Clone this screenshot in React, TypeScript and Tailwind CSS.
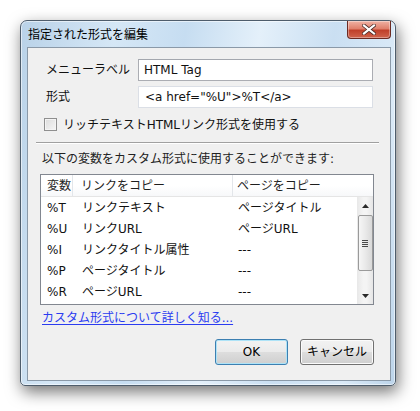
import React from "react";

const FONT = "font-['DejaVu_Sans','Noto_Sans_CJK_JP',sans-serif]";

type Row = { v: string; link: string; page: string };

const ROWS: Row[] = [
  { v: "%T", link: "リンクテキスト", page: "ページタイトル" },
  { v: "%U", link: "リンクURL", page: "ページURL" },
  { v: "%I", link: "リンクタイトル属性", page: "---" },
  { v: "%P", link: "ページタイトル", page: "---" },
  { v: "%R", link: "ページURL", page: "---" },
];

function CloseButton() {
  return (
    <div className="mt-0 flex h-[18px] w-[44px] items-center justify-center rounded-b-[4px] border border-t-0 border-[#6b2a22] bg-[linear-gradient(180deg,#f0b2a4_0%,#e0806c_45%,#c0402a_55%,#d0644c_100%)] shadow-[inset_0_0_0_1px_rgba(255,255,255,0.35)]">
      <svg width="14" height="11" viewBox="0 0 14 11" aria-hidden="true">
        <path
          d="M2 1.5 12 9.5M12 1.5 2 9.5"
          stroke="#4a2a26"
          strokeWidth="3.6"
          strokeLinecap="square"
        />
        <path
          d="M2 1.5 12 9.5M12 1.5 2 9.5"
          stroke="#ffffff"
          strokeWidth="2.2"
          strokeLinecap="square"
        />
      </svg>
    </div>
  );
}

function Scrollbar() {
  return (
    <div className="flex w-[16px] shrink-0 flex-col items-center bg-[linear-gradient(90deg,#e8e8e8,#f4f4f4_40%,#f4f4f4_60%,#e6e6e6)]">
      {/* up arrow */}
      <div className="flex h-[18px] w-full items-center justify-center">
        <svg width="7" height="4" viewBox="0 0 7 4" aria-hidden="true">
          <path d="M0 4 3.5 0 7 4z" fill="#2a2a2a" />
        </svg>
      </div>
      {/* thumb */}
      <div className="flex h-[56px] w-[15px] items-center justify-center rounded-[2px] border border-[#9a9a9a] bg-[linear-gradient(90deg,#f6f6f6,#e9e9e9_50%,#d9d9d9)]">
        <div className="flex flex-col gap-[1px]">
          <span className="h-px w-[6px] bg-[#4a4a4a]" />
          <span className="h-px w-[6px] bg-[#4a4a4a]" />
          <span className="h-px w-[6px] bg-[#4a4a4a]" />
          <span className="h-px w-[6px] bg-[#4a4a4a]" />
        </div>
      </div>
      <div className="flex-1" />
      {/* down arrow */}
      <div className="flex h-[16px] w-full items-center justify-center">
        <svg width="7" height="4" viewBox="0 0 7 4" aria-hidden="true">
          <path d="M0 0 3.5 4 7 0z" fill="#2a2a2a" />
        </svg>
      </div>
    </div>
  );
}

function VarList() {
  return (
    <div className="ml-[12px] mt-[7px] flex h-[131px] w-[334px] flex-col border border-[#828790] bg-white">
      {/* header */}
      <div className="flex h-[22px] shrink-0 items-center border-b border-[#e5e5e5] bg-[linear-gradient(180deg,#ffffff,#ffffff_50%,#f7f8fa)] text-[#1e1e1e]">
        <div className="flex h-full w-[32px] items-center border-r border-[#e3e6ea] pl-[6px]">
          変数
        </div>
        <div className="flex h-full w-[160px] items-center border-r border-[#e3e6ea] pl-[8px]">
          リンクをコピー
        </div>
        <div className="flex h-full flex-1 items-center pl-[4px]">
          ページをコピー
        </div>
      </div>
      <div className="flex min-h-0 flex-1">
        <div className="flex flex-1 flex-col">
          {ROWS.map((r) => (
            <div key={r.v} className="flex h-[21px] shrink-0 items-center">
              <div className="w-[32px] pl-[6px]">{r.v}</div>
              <div className="w-[160px] pl-[9px]">{r.link}</div>
              <div className="flex-1 pl-[5px]">{r.page}</div>
            </div>
          ))}
        </div>
        <Scrollbar />
      </div>
    </div>
  );
}

export default function App() {
  return (
    <div
      className={`h-[411px] w-[420px] overflow-hidden bg-white pl-[20px] pt-[20px] text-[12px] leading-[16px] text-[#111] ${FONT}`}
    >
      {/* window frame */}
      <div className="flex h-[366px] w-[376px] flex-col rounded-t-[7px] rounded-b-[5px] border border-[#4e5d6c] bg-[linear-gradient(100deg,#b9d2e8_0%,#d5e7f6_22%,#c6ddf1_38%,#e4f0fa_55%,#cadff2_72%,#dbeaf7_88%,#bcd4ea_100%)] shadow-[2px_6px_16px_rgba(0,0,0,0.55),inset_0_0_0_1px_rgba(255,255,255,0.55)]">
        {/* title bar */}
        <div className="flex h-[26px] shrink-0 items-start justify-between pl-[7px] pr-[4px]">
          <span className="mt-[6px] text-[12px] leading-[16px] text-black">
            指定された形式を編集
          </span>
          <CloseButton />
        </div>

        {/* client area */}
        <div className="ml-[6px] flex h-[334px] w-[364px] flex-col border border-[#8a99a8] bg-[#f0f0f0]">
          {/* menu label */}
          <div className="mt-[11px] flex items-center">
            <span className="w-[110px] pl-[18px]">メニューラベル</span>
            <div className="flex h-[22px] w-[235px] items-center border border-[#abadb3] border-t-[#a3a7ae] bg-white pl-[5px]">
              HTML Tag
            </div>
          </div>
          {/* format */}
          <div className="mt-[5px] flex items-center">
            <span className="w-[110px] pl-[18px]">形式</span>
            <div className="flex h-[22px] w-[235px] items-center border border-[#dbdfe6] bg-white pl-[6px]">
              &lt;a href="%U"&gt;%T&lt;/a&gt;
            </div>
          </div>
          {/* rich text checkbox */}
          <div className="ml-[16px] mt-[10px] flex h-[13px] items-center">
            <span className="h-[13px] w-[13px] border border-[#8f8f8f] bg-[linear-gradient(135deg,#dcdcdc,#f6f6f6)] shadow-[inset_0_0_0_1px_#f4f4f4]" />
            <span className="ml-[6px]">リッチテキストHTMLリンク形式を使用する</span>
          </div>
          {/* separator */}
          <div className="ml-[8px] mt-[11px] h-[2px] w-[343px] border-t border-b border-t-[#a0a0a0] border-b-white" />

          <div className="ml-[14px] mt-[7px] text-[#222]">
            以下の変数をカスタム形式に使用することができます:
          </div>

          <VarList />

          <a
            href="#"
            className="ml-[14px] mt-[5px] self-start text-[#2b3cf0] underline decoration-[#2b3cf0] underline-offset-[2px]"
          >
            カスタム形式について詳しく知る...
          </a>

          {/* buttons */}
          <div className="mr-[16px] mt-[13px] flex justify-end gap-[12px]">
            <button className="flex h-[26px] w-[73px] items-center justify-center rounded-[3px] border border-[#3c7fb1] bg-[linear-gradient(180deg,#f2f2f2_0%,#ebebeb_48%,#dddddd_52%,#cfcfcf_100%)] shadow-[inset_0_0_0_1px_#aee3f7] text-black">
              OK
            </button>
            <button className="flex h-[26px] w-[74px] items-center justify-center rounded-[3px] border border-[#707070] bg-[linear-gradient(180deg,#f2f2f2_0%,#ebebeb_48%,#dddddd_52%,#cfcfcf_100%)] shadow-[inset_0_0_0_1px_#fbfbfb] text-black">
              キャンセル
            </button>
          </div>
        </div>
      </div>
    </div>
  );
}
